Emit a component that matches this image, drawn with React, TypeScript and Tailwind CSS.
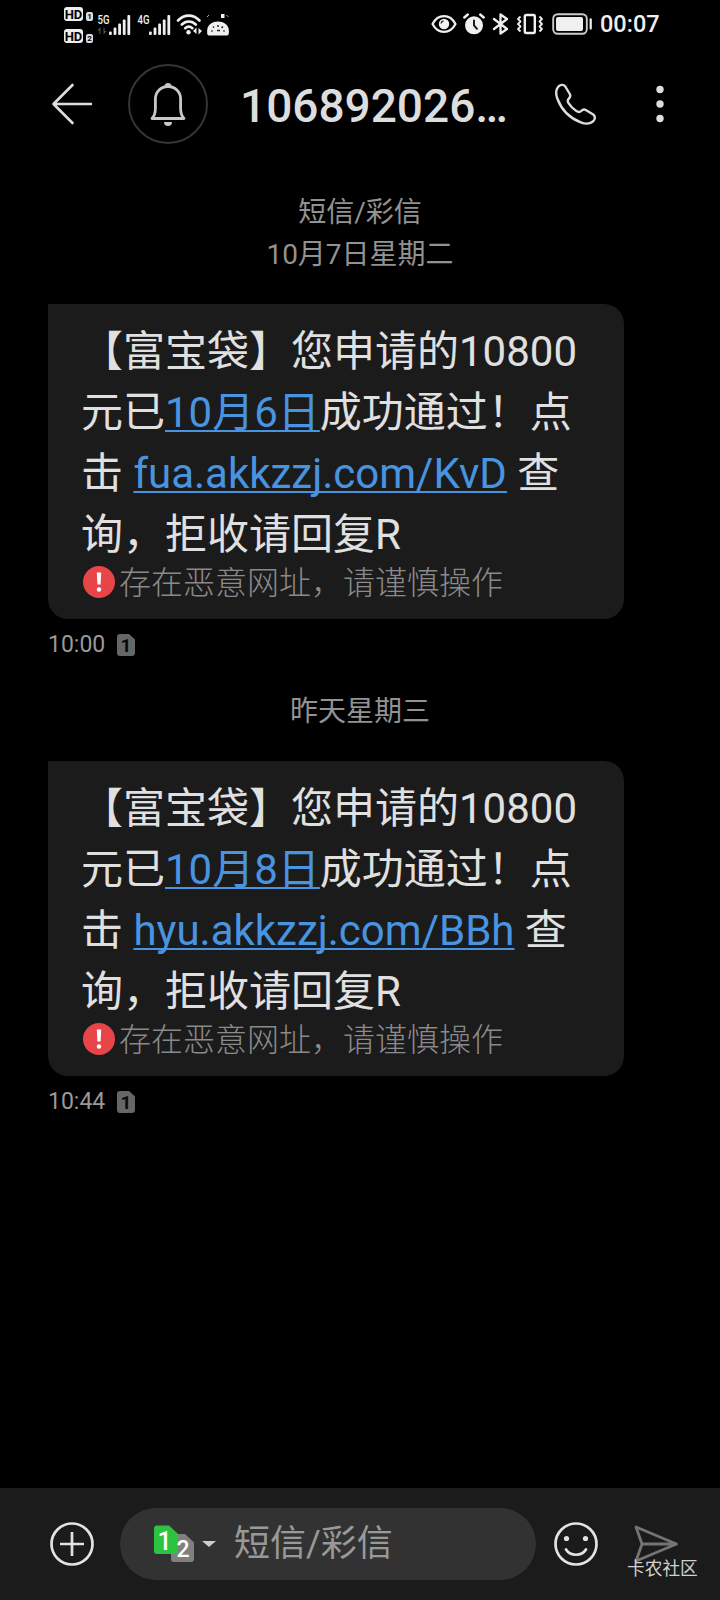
import type { ReactNode } from 'react';

type Message = {
  id: number;
  date: string[];
  day: string;
  link: string;
  time: string;
};

const messages: Message[] = [
  { id: 1, date: ['短信/彩信', '10月7日星期二'], day: '10月6日', link: 'fua.akkzzj.com/KvD', time: '10:00' },
  { id: 2, date: ['昨天星期三'], day: '10月8日', link: 'hyu.akkzzj.com/BBh', time: '10:44' },
];

function HdBadge({ sim }: { sim: number }) {
  return (
    <div className="flex h-[14px] items-end gap-[3px]">
      <span className="flex h-[14px] w-[19px] items-center justify-center rounded-[3px] bg-[#eee] text-[13px] font-bold leading-none text-black">
        HD
      </span>
      <span className="flex h-[9px] w-[7px] items-center justify-center rounded-[2px] bg-[#ddd] text-[8px] font-bold leading-none text-black">
        {sim}
      </span>
    </div>
  );
}

function Signal({ label, data }: { label: string; data?: boolean }) {
  return (
    <svg width="34" height="24" viewBox="0 0 34 24" fill="#f0f0f0">
      <text x="0.5" y="12" fontSize="12" fontWeight="500" textLength="12" lengthAdjust="spacingAndGlyphs">
        {label}
      </text>
      {data && (
        <g fill="#555">
          <path d="M3.5 15v7h-1v-3.500H.5zM6.500 22.500v-7h1V19h2z" />
        </g>
      )}
      <rect x="12" y="19.500" width="2.800" height="3.500" rx="1" />
      <rect x="16.600" y="15.500" width="2.800" height="7.500" rx="1" />
      <rect x="21.200" y="11.500" width="2.800" height="11.500" rx="1" />
      <rect x="25.800" y="7.500" width="2.800" height="15.500" rx="1" />
      <rect x="30.400" y="3" width="2.800" height="20" rx="1" />
    </svg>
  );
}

function StatusBar() {
  return (
    <div className="flex h-12 shrink-0 items-center justify-between pl-16 pr-[62px]">
      <div className="flex items-center">
        <div className="mr-[4px] mt-[2px] flex flex-col gap-[8px]">
          <HdBadge sim={1} />
          <HdBadge sim={2} />
        </div>
        <Signal label="5G" data />
        <div className="w-[6px]" />
        <Signal label="4G" />
        <svg className="ml-[5px]" width="27" height="24" viewBox="0 0 27 24" fill="none" stroke="#f0f0f0" strokeWidth="2.6" strokeLinecap="round">
          <path d="M2 8.500C8.500 2 17 2 23.500 8.500M5.800 12.500c4-4 10-4 14 0M9.200 16.200c2.200-2 5-2 7.200 0" />
          <circle cx="12.500" cy="20.300" r="2.200" fill="#f0f0f0" stroke="none" />
          <path d="M20.500 15.500v6.500l-3.500-3zM22.500 22.500V16l3.500 3z" fill="#f0f0f0" stroke="none" />
        </svg>
        <svg className="ml-[3px]" width="24" height="24" viewBox="0 0 24 24" fill="#f0f0f0">
          <path d="M3 23.500C.8 23.500 1 20 1.300 17c.5-4 5.200-7.500 10.700-7.500S22.200 13 22.700 17c.3 3 .5 6.500-1.700 6.500z" />
          <path d="M15 2h3.500v4H15z" />
          <path d="M1 5l2-2M20.500 3l2 2" stroke="#aaa" />
          <path d="M5.500 18.500l1 1M7 14.500l1 1M12 13v2M17 14.500l-1.500 1.500M18.500 18.500l-1 1M11 18.500h3" stroke="#222" strokeWidth="1.500" />
        </svg>
      </div>

      <div className="flex items-center">
        <svg width="26" height="22" viewBox="0 0 26 22" fill="none" stroke="#f0f0f0" strokeWidth="2.200">
          <path d="M1.500 11C7 .5 19 .5 24.500 11 19 21.500 7 21.500 1.500 11z" strokeLinejoin="round" />
          <circle cx="13" cy="11" r="5.200" fill="#f0f0f0" stroke="none" />
          <path d="M10 10.500a3 3 0 0 1 2.500-2.500" stroke="#222" strokeWidth="1.300" />
        </svg>
        <svg className="ml-[6px]" width="22" height="22" viewBox="0 0 22 22" fill="none">
          <circle cx="11" cy="12.300" r="9" fill="#f0f0f0" />
          <path d="M1.300 4.500l3.500-3M20.700 4.500l-3.500-3" stroke="#f0f0f0" strokeWidth="2.400" strokeLinecap="round" />
          <path d="M11 7.500v5l3 3.300" stroke="#111" strokeWidth="1.900" strokeLinecap="round" />
        </svg>
        <svg className="ml-[7px]" width="18" height="22" viewBox="0 0 18 22" fill="none" stroke="#f0f0f0" strokeWidth="2.300" strokeLinejoin="round" strokeLinecap="round">
          <path d="M2 6l13 10-6.500 4.500v-19L15 6 2 16" />
        </svg>
        <svg className="ml-[6px]" width="28" height="22" viewBox="0 0 28 22" fill="none" stroke="#f0f0f0" strokeWidth="2.400" strokeLinejoin="round">
          <rect x="8.800" y="2" width="10" height="18" rx="1.500" />
          <path d="M4.500 3.500L2 6l2.500 2.500L2 11l2.500 2.500L2 16l2.500 2.500M23.500 3.500L26 6l-2.500 2.500L26 11l-2.500 2.500L26 16l-2.500 2.500" strokeWidth="1.800" />
        </svg>
        <svg className="ml-[8px]" width="41" height="22" viewBox="0 0 41 22" fill="none">
          <rect x="1.200" y="1.200" width="33.600" height="19.600" rx="4.500" stroke="#ccc" strokeWidth="1.900" />
          <rect x="4" y="4" width="27" height="14" rx="2" fill="#f0f0f0" />
          <path d="M38.700 6.500v9" stroke="#e5e5e5" strokeWidth="2.300" strokeLinecap="round" />
        </svg>
        <span className="ml-[7px] w-[58px] whitespace-nowrap text-[23.500px] font-medium leading-6 text-[#f0f0f0]">00:07</span>
      </div>
    </div>
  );
}

function Header() {
  return (
    <header className="flex h-28 shrink-0 items-center pl-[50px]">
      <svg width="44" height="44" viewBox="0 0 44 44" fill="none" stroke="#ddd" strokeWidth="2.600" strokeLinecap="round" strokeLinejoin="round">
        <path d="M22.500 3L3.500 22l19 19M3.500 22H41" />
      </svg>
      <div className="ml-[34px] flex size-20 items-center justify-center rounded-full border-2 border-[#353535]">
        <svg width="40" height="46" viewBox="0 0 40 46" fill="none" stroke="#c8c8c8" strokeWidth="2.800">
          <path d="M4 37.500c2.800-3 3.400-6 3.400-10V18C7.400 10.500 13 5.500 20 5.500S32.600 10.500 32.600 18v9.500c0 4 .6 7 3.400 10z" strokeLinejoin="round" />
          <path d="M16.500 5.500a3.500 3.500 0 0 1 7 0zM16 41h8a4 4 0 0 1-8 0z" fill="#c8c8c8" stroke="none" />
        </svg>
      </div>
      <h1 className="ml-[32px] w-[272px] whitespace-nowrap text-[46px] font-medium leading-none text-[#ddd]">
        <span className="relative top-[2px]">106892026…</span>
      </h1>
      <svg className="ml-[42px]" width="44" height="44" viewBox="0 0 44 44" fill="none" stroke="#ddd" strokeWidth="2.400" strokeLinejoin="round">
        <path d="M4.200 4.800C6 2.500 9.500 2 11.300 4.500l4.500 7.500c1 2 .4 3.300-1 4.600-1.400 1.400-1.300 3-.1 4.800 2 3.100 4.600 5.700 7.700 7.700 1.800 1.200 3.400 1.300 4.800-.1 1.300-1.400 2.600-2 4.600-1l7.400 4.500c2.500 1.800 2 5.200-.3 7-3.400 2.700-7.600 2.700-12.100.8C16 36.300 7.500 27.500 3.500 17 1.800 12.500 1.500 8 4.200 4.800z" />
      </svg>
      <svg className="ml-[56px]" width="12" height="40" viewBox="0 0 12 40" fill="#ddd">
        <circle cx="6" cy="5.500" r="3.700" />
        <circle cx="6" cy="20" r="3.700" />
        <circle cx="6" cy="34.500" r="3.700" />
      </svg>
    </header>
  );
}

function Link({ children }: { children: ReactNode }) {
  return (
    <a className="text-[#4894e0] underline decoration-2 underline-offset-[3px] [text-decoration-skip-ink:none]">{children}</a>
  );
}

function Bubble({ day, link }: { day: string; link: string }) {
  return (
    <div className="h-[315px] w-[576px] rounded-[20px] rounded-tl-none bg-[#1b1b1b] pl-[33px] pt-[17px]">
      <div className="whitespace-nowrap text-[42px] leading-[61px] text-[#e0e0e0]">
        <p>【富宝袋】您申请的10800</p>
        <p>
          元已<Link>{day}</Link>成功通过！点
        </p>
        <p>
          击 <Link>{link}</Link> 查
        </p>
        <p>询，拒收请回复R</p>
      </div>
      <div className="flex h-[37px] items-center">
        <svg className="ml-[2px] mr-[4px] -mt-[3px]" width="32" height="32" viewBox="0 0 32 32">
          <circle cx="16" cy="16" r="16" fill="#e84549" />
          <path d="M13.800 6.500h4.400l-.6 12h-3.200z" fill="#fff" />
          <circle cx="16" cy="23.500" r="2.200" fill="#fff" />
        </svg>
        <span className="text-[32px] font-light leading-[37px] text-[#8a8a8a]">存在恶意网址，请谨慎操作</span>
      </div>
    </div>
  );
}

function MessageItem({ message }: { message: Message }) {
  return (
    <section>
      <div className="text-center text-[28px] leading-[42px] text-[#929292]">
        {message.date.map((line) => (
          <p key={line}>{line}</p>
        ))}
      </div>
      <div className="mt-[28px] pl-12">
        <Bubble day={message.day} link={message.link} />
        <div className="mt-[10px] flex h-8 items-center gap-[12px] text-[23px] leading-8 text-[#999]">
          {message.time}
          <svg width="18" height="22" viewBox="0 0 18 22">
            <path d="M3 0h9l6 5.500V19a3 3 0 0 1-3 3H3a3 3 0 0 1-3-3V3a3 3 0 0 1 3-3z" fill="#666" />
            <text x="9" y="18" textAnchor="middle" fontSize="19" fontWeight="700" fill="#0a0a0a">
              1
            </text>
          </svg>
        </div>
      </div>
    </section>
  );
}

function Composer() {
  return (
    <footer className="flex h-28 shrink-0 items-center bg-[#1b1b1b] pl-[50px]">
      <svg width="44" height="44" viewBox="0 0 44 44" fill="none" stroke="#e2e2e2" strokeWidth="2.700">
        <circle cx="22" cy="22" r="20.500" />
        <path d="M22 10v24M10 22h24" />
      </svg>
      <div className="ml-[26px] flex h-[72px] w-[416px] items-center rounded-full bg-[#323232] pl-[34px]">
        <svg width="40" height="38" viewBox="0 0 40 38">
          <path d="M20 9h11l9 8.500V34a3 3 0 0 1-3 3H20a3 3 0 0 1-3-3V12a3 3 0 0 1 3-3z" fill="#808080" />
          <path d="M3 .5h12l9 8.500v17a3 3 0 0 1-3 3H3a3 3 0 0 1-3-3V3.500a3 3 0 0 1 3-3z" fill="#2bc440" />
          <text x="10.500" y="24.500" textAnchor="middle" fontSize="25" fontWeight="500" fill="#fff">
            1
          </text>
          <text x="29" y="32" textAnchor="middle" fontSize="23" fontWeight="500" fill="#fff">
            2
          </text>
        </svg>
        <svg className="ml-[8px]" width="14" height="6" viewBox="0 0 14 6">
          <path d="M0 0h14L7 6z" fill="#ccc" />
        </svg>
        <span className="ml-[18px] text-[36px] leading-none text-[#999]">短信/彩信</span>
      </div>
      <svg className="ml-[18px]" width="44" height="44" viewBox="0 0 44 44" fill="none" stroke="#e2e2e2" strokeWidth="2.700" strokeLinecap="round">
        <circle cx="22" cy="22" r="20.500" />
        <path d="M12 27.500c4.500 7 15.500 7 20 0" />
        <circle cx="12.500" cy="16.500" r="2.600" fill="#e2e2e2" stroke="none" />
        <circle cx="31.500" cy="16.500" r="2.600" fill="#e2e2e2" stroke="none" />
      </svg>
      <div className="relative ml-[35px]">
        <svg width="46" height="38" viewBox="0 0 46 38" fill="none" stroke="#747474" strokeWidth="2.800" strokeLinejoin="round">
          <path d="M3 2l40.500 17L3 36l6-17zM9 19h34" />
        </svg>
        <span className="absolute -left-[6px] top-[32px] whitespace-nowrap text-[17.700px] leading-6 text-[#d0d0d0]">卡农社区</span>
      </div>
    </footer>
  );
}

export default function App() {
  return (
    <div className="flex h-[1600px] w-[720px] flex-col overflow-hidden bg-black font-[Roboto,'Noto_Sans_CJK_SC',sans-serif]">
      <StatusBar />
      <Header />
      <main className="flex flex-1 flex-col gap-[30px] pt-[32px]">
        {messages.map((message) => (
          <MessageItem key={message.id} message={message} />
        ))}
      </main>
      <Composer />
    </div>
  );
}
